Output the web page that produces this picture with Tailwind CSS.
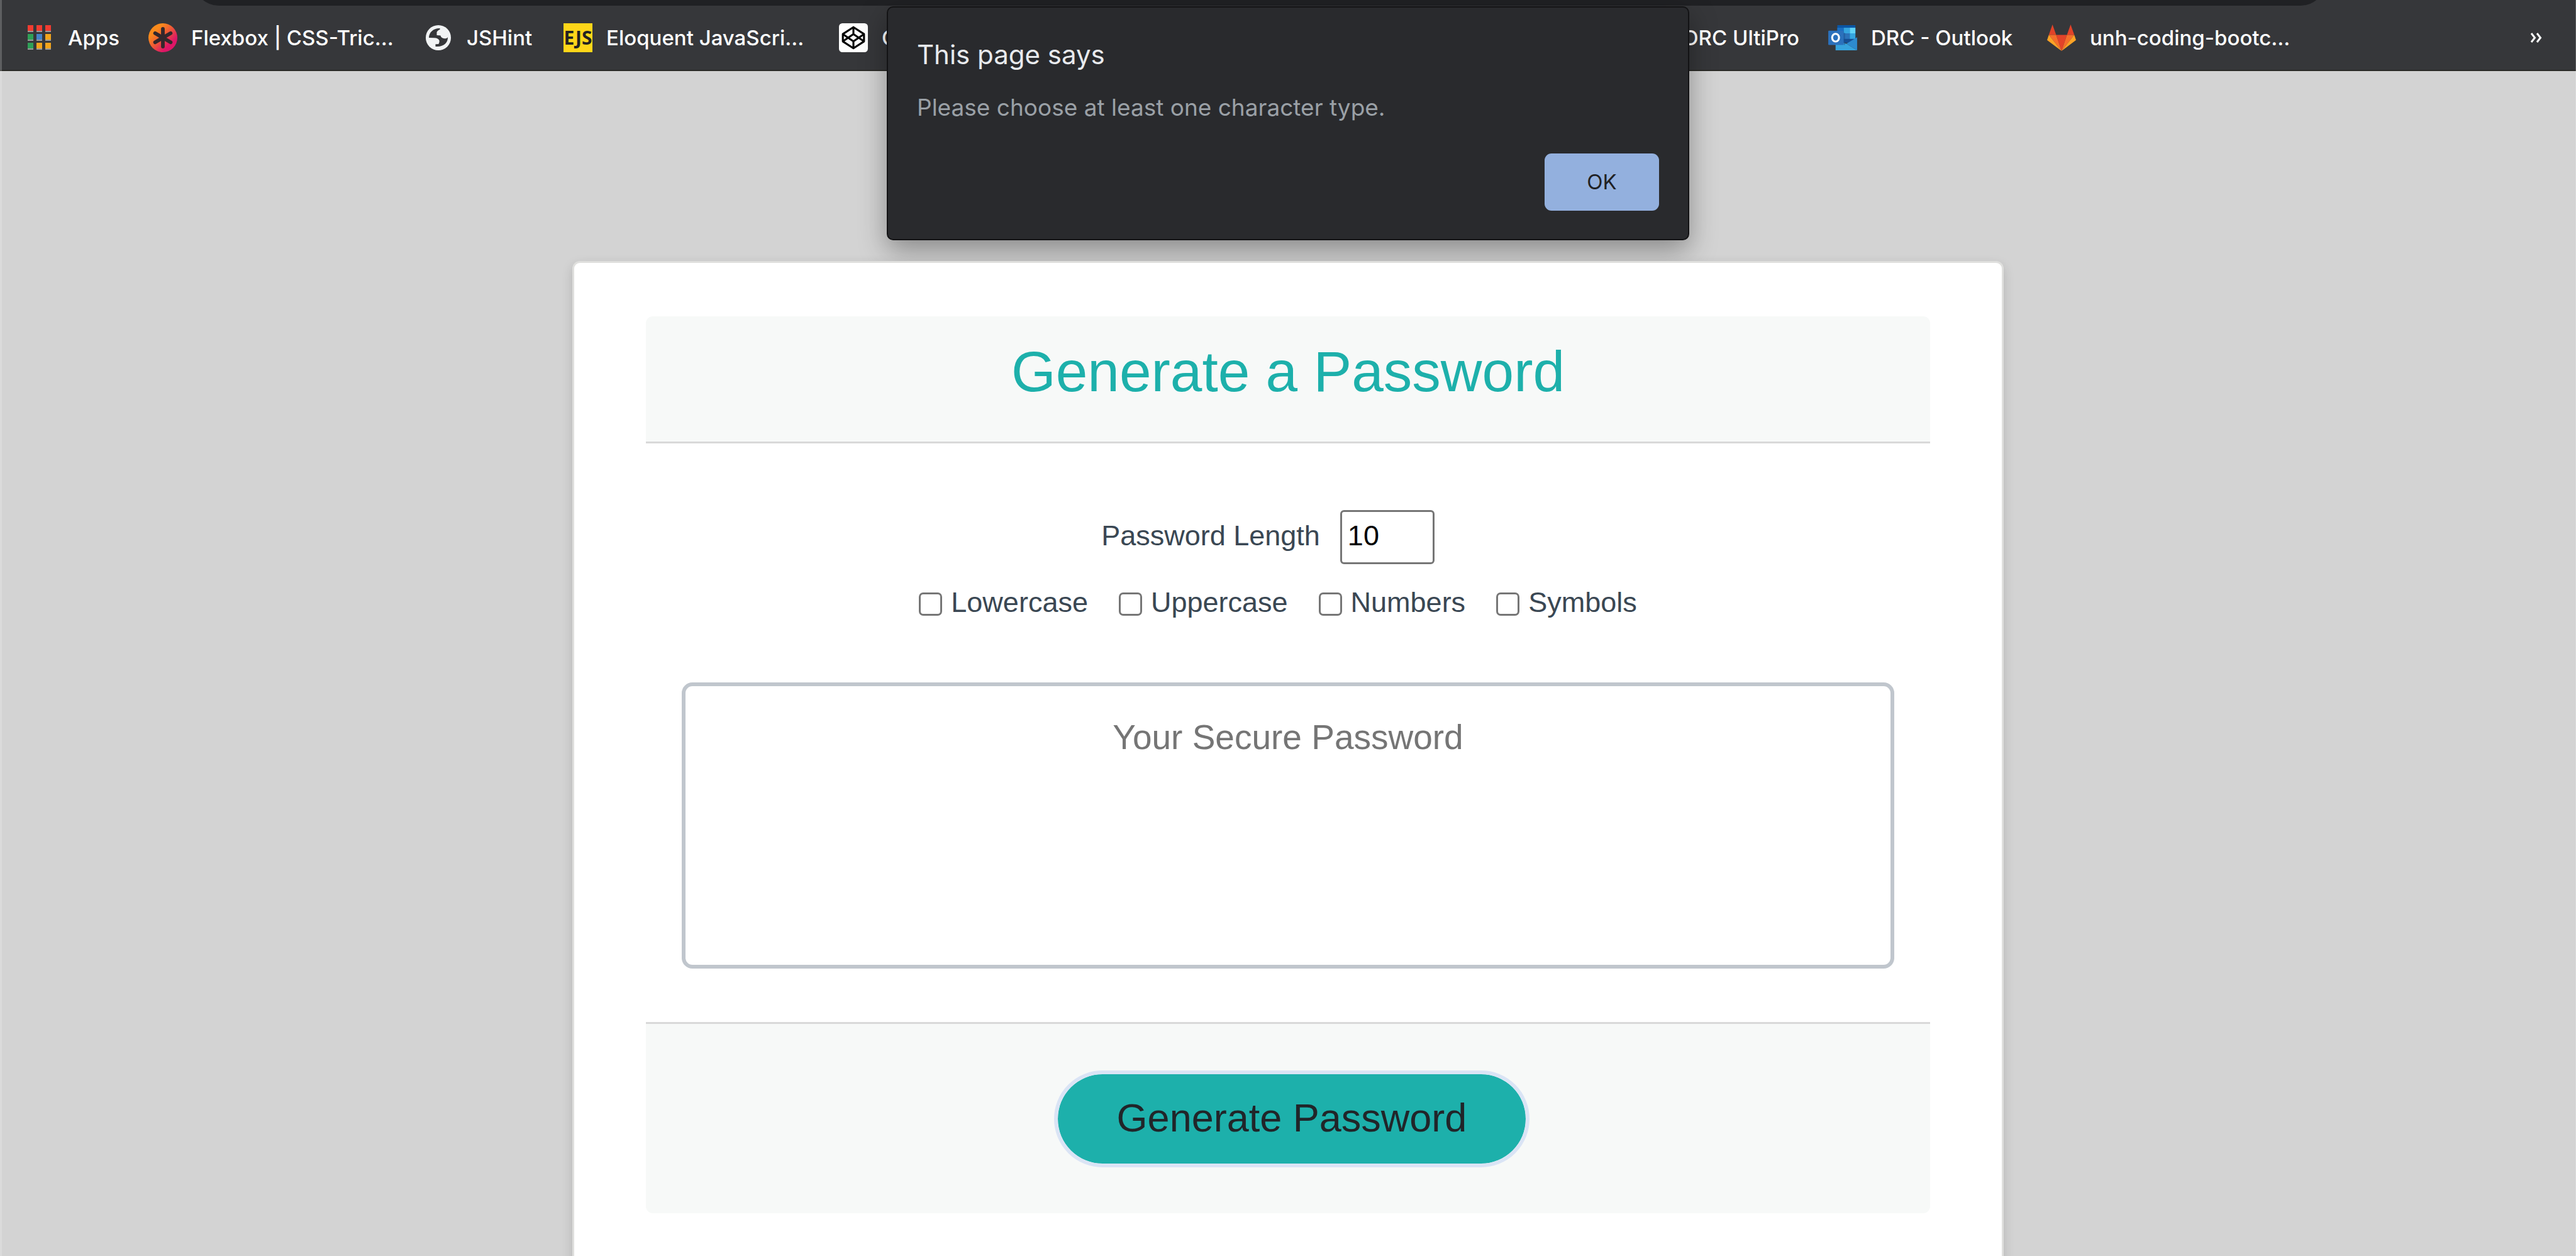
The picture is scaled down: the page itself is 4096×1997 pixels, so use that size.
<!DOCTYPE html>
<html lang="en">
<head>
<meta charset="utf-8">
<title>Password Generator</title>
<script src="https://cdn.jsdelivr.net/npm/@tailwindcss/browser@4"></script>
</head>
<body class="bg-[#d3d3d3]">
<div class="relative flex h-screen flex-col overflow-hidden bg-[#d3d3d3] font-['Liberation_Sans',Arial,sans-serif]">

  <!-- Browser toolbar edge and bookmarks bar -->
  <header class="shrink-0 border-b-2 border-[#2b2b27] bg-[#36373a] font-['Inter',sans-serif]">
    <div class="flex h-[9px] items-end overflow-hidden pr-[398px] pl-[308px]">
      <div class="h-20 w-full shrink-0 rounded-[40px] bg-[#202124]"></div>
    </div>
    <nav aria-label="Bookmarks" class="flex h-[102px] items-center pr-[54px] pl-10 text-[33px] leading-[46px] font-medium whitespace-nowrap text-white">
      <a href="#" class="flex shrink-0 items-center gap-[22px]">
        <svg class="size-[46px]" viewBox="0 0 46 46" aria-hidden="true">
          <g fill="#9a9a9a"><path d="M4 12h9v2H4zM18 12h9v2h-9zM32 12h9v2h-9zM4 26h9v2H4zM18 26h9v2h-9zM32 26h9v2h-9zM4 40h9v2H4zM18 40h9v2h-9zM32 40h9v2h-9z"/></g>
          <path fill="#f13c31" d="M4 3h9v9H4zM18 3h9v9h-9zM32 3h9v9h-9z"/>
          <path fill="#2fa057" d="M4 17h9v9H4zM4 31h9v9H4z"/>
          <path fill="#4582c8" d="M18 17h9v9h-9z"/>
          <path fill="#f2a41c" d="M32 17h9v9h-9zM18 31h9v9h-9zM32 31h9v9h-9z"/>
        </svg>
        <span class="w-32">Apps</span>
      </a>
      <a href="#" class="flex shrink-0 items-center gap-[22px]">
        <svg class="size-[46px]" viewBox="0 0 67 67" aria-hidden="true">
          <defs><linearGradient id="sun" x1="0.1" y1="0.1" x2="0.85" y2="0.85"><stop offset="0.2" stop-color="#f98a1c"/><stop offset="0.5" stop-color="#ee5a35"/><stop offset="0.85" stop-color="#dd1667"/></linearGradient></defs>
          <circle cx="33.5" cy="33.5" r="33.5" fill="url(#sun)"/>
          <path d="M33.500 13v41M15.500 23l36 21M51.500 23l-36 21" stroke="#33282c" stroke-width="8.500" stroke-linecap="round"/>
        </svg>
        <span class="w-[370px]">Flexbox | CSS-Tric...</span>
      </a>
      <a href="#" class="flex shrink-0 items-center gap-[22px]">
        <svg class="size-[46px]" viewBox="-13 -13 202 202" aria-hidden="true">
          <circle cx="88" cy="88" r="88" fill="#f1f3f4"/>
          <path fill="#36373a" d="M22 88C22 50 55 20 99 22V31Q80 38 77 50V70L103 73Q108 92 130 94Q150 94 154 84C156 125 120 156 68 149V133L90 132Q97 120 95 108Q88 90 60 89Z"/>
        </svg>
        <span class="w-[154px]">JSHint</span>
      </a>
      <a href="#" class="flex shrink-0 items-center gap-[22px]">
        <svg class="size-[46px]" viewBox="0 0 46 46" aria-hidden="true">
          <rect width="46" height="46" fill="#ffd619"/>
          <text x="23" y="34" text-anchor="middle" font-family="Noto Sans, sans-serif" font-weight="bold" font-size="30" fill="#222222">EJS</text>
        </svg>
        <span class="w-[370px]">Eloquent JavaScri...</span>
      </a>
      <a href="#" class="flex shrink-0 items-center gap-[22px]">
        <svg class="size-[46px]" viewBox="0 0 67 67" aria-hidden="true">
          <rect width="67" height="67" rx="8" fill="#fff"/>
          <path fill="none" stroke="#000" stroke-width="4.500" stroke-linejoin="round" d="M33.500 9L58 25V42L33.500 58L9 42V25ZM33.500 9V25M33.500 42V58M9 25L33.500 42L58 25M9 42L33.500 25L58 42"/>
        </svg>
        <span class="w-[1058px]">C</span>
      </a>
      <a href="#" class="w-[447px] shrink-0 pr-[46px] text-right">DRC UltiPro</a>
      <a href="#" class="flex shrink-0 items-center gap-[22px]">
        <svg class="h-10 w-[46px]" viewBox="0 0 67 58.4" aria-hidden="true">
          <path fill="#0a55a4" d="M21 0h42v40H21z"/>
          <path fill="#1a6fc2" d="M21 6h15v13H21z"/><path fill="#35a5df" d="M36 6h14v13H36z"/><path fill="#60d3f7" d="M50 6h13v13H50z"/>
          <path fill="#1b5fa9" d="M21 19h15v22H21z"/><path fill="#2c73ba" d="M36 19h14v13H36z"/><path fill="#35a5df" d="M50 19h13v13H50z"/>
          <path fill="#164f95" d="M36 32h27v9H36z"/>
          <path fill="#36a3dc" d="M17 35l25 8L67 58.400H17z"/><path fill="#2d8bcf" d="M67 28L42 43l25 15.400z"/>
          <path fill="#1a4f8a" opacity=".5" d="M17 46h22V18h-3v28z"/>
          <rect y="12.700" width="35.700" height="33.300" rx="2" fill="#2b71bc"/>
          <ellipse cx="17" cy="29" rx="8" ry="9" fill="none" stroke="#fff" stroke-width="4.500"/>
        </svg>
        <span class="w-[280px]">DRC - Outlook</span>
      </a>
      <a href="#" class="flex shrink-0 items-center gap-[22px]">
        <svg class="h-[42px] w-[46px]" viewBox="0 0 67 61" aria-hidden="true">
          <path fill="#e24329" d="M12.500 0L21 24H4ZM54.500 0L63 24H46ZM21 24H46L33.500 61Z"/>
          <path fill="#f66e2b" d="M4 24H21L33.500 61ZM63 24H46L33.500 61Z"/>
          <path fill="#fca326" d="M4 24L0 36L33.500 61ZM63 24L67 36L33.500 61Z"/>
        </svg>
        <span>unh-coding-bootc...</span>
      </a>
      <button type="button" aria-label="More bookmarks" class="ml-auto">
        <svg class="h-4 w-[19px]" viewBox="0 0 19 16" fill="none" stroke="#fff" stroke-width="3" aria-hidden="true"><path d="M2 1L7.500 8L2 15M11 1L16.500 8L11 15"/></svg>
      </button>
    </nav>
  </header>

  <!-- Password card -->
  <main class="relative z-20 mx-auto mt-[302px] w-full max-w-[2276px] shrink-0 rounded-[12px] border-[3px] border-[#dfdfdd] bg-white px-[114px] py-[85px] shadow-[0_6px_17px_rgba(0,0,0,0.15)]">
    <div class="rounded-t-[11px] border-b-[3px] border-[#d9d9d9] bg-[#f7f9f8] pt-[33px] pb-[57px]">
      <h1 class="text-center text-[91px] leading-[109px] text-[#1db0ab]">Generate a Password</h1>
    </div>

    <form id="options" class="px-[57px] pt-[106px] pb-[85px] text-[45px] leading-[68px] text-[#3a4753]">
      <div class="flex items-center justify-center gap-8 pr-16">
        <label for="length" class="pb-1">Password Length</label>
        <input id="length" type="number" value="10" class="h-[86px] w-[150px] rounded-[6px] border-[3px] border-[#767676] bg-white px-[9px] pb-1 text-black">
      </div>
      <div class="flex items-center justify-center gap-[49px] pt-[27px] pr-8">
        <label class="flex items-center gap-[14px]"><input type="checkbox" class="mt-1 size-[37px] appearance-none rounded-[7px] border-[3px] border-[#767676] bg-white">Lowercase</label>
        <label class="flex items-center gap-[14px]"><input type="checkbox" class="mt-1 size-[37px] appearance-none rounded-[7px] border-[3px] border-[#767676] bg-white">Uppercase</label>
        <label class="flex items-center gap-[14px]"><input type="checkbox" class="mt-1 size-[37px] appearance-none rounded-[7px] border-[3px] border-[#767676] bg-white">Numbers</label>
        <label class="flex items-center gap-[14px]"><input type="checkbox" class="mt-1 size-[37px] appearance-none rounded-[7px] border-[3px] border-[#767676] bg-white">Symbols</label>
      </div>
      <textarea readonly aria-label="Your Secure Password" placeholder="Your Secure Password" class="mt-[93px] block h-[455px] w-full resize-none rounded-[17px] border-[6px] border-[#c0c6cd] bg-white py-10 text-center text-[55px] leading-[82px] placeholder:text-[#757575]"></textarea>
    </form>

    <div class="flex justify-center rounded-b-[11px] border-t-[3px] border-[#d9d9d9] bg-[#f7f9f8] pt-[74px] pb-[73px] pl-3">
      <button type="submit" form="options" class="h-[154px] rounded-full border-[6px] border-[#dae4f5] bg-[#1db0ab] bg-clip-padding px-[94px] pb-1 text-[63px] leading-[95px] text-[#212529]">Generate Password</button>
    </div>
  </main>

  <!-- Alert shown over the page -->
  <div role="alertdialog" aria-labelledby="alert-title" aria-describedby="alert-text" class="absolute inset-x-0 top-[10px] z-10 mx-auto w-[1276px] rounded-[10px] border-2 border-[#131315] bg-[#292a2d] px-[46px] pt-[47px] pb-[45px] font-['Inter',sans-serif] shadow-[0_16px_44px_rgba(0,0,0,0.35)]">
    <h2 id="alert-title" class="text-[42px] leading-[56px] text-[#e8eaed]">This page says</h2>
    <p id="alert-text" class="pt-[31px] text-[37px] leading-[50px] text-[#9aa0a6]">Please choose at least one character type.</p>
    <div class="flex justify-end pt-12">
      <button type="button" class="h-[91px] w-[182px] rounded-[11px] bg-[#93b0de] text-[33px] text-[#202124]">OK</button>
    </div>
  </div>

  <!-- Window edge highlights -->
  <div class="absolute inset-y-0 left-0 z-30 w-[3px] bg-white/20"></div>
  <div class="absolute inset-y-0 right-0 z-30 w-px bg-white/20"></div>
</div>
</body>
</html>
